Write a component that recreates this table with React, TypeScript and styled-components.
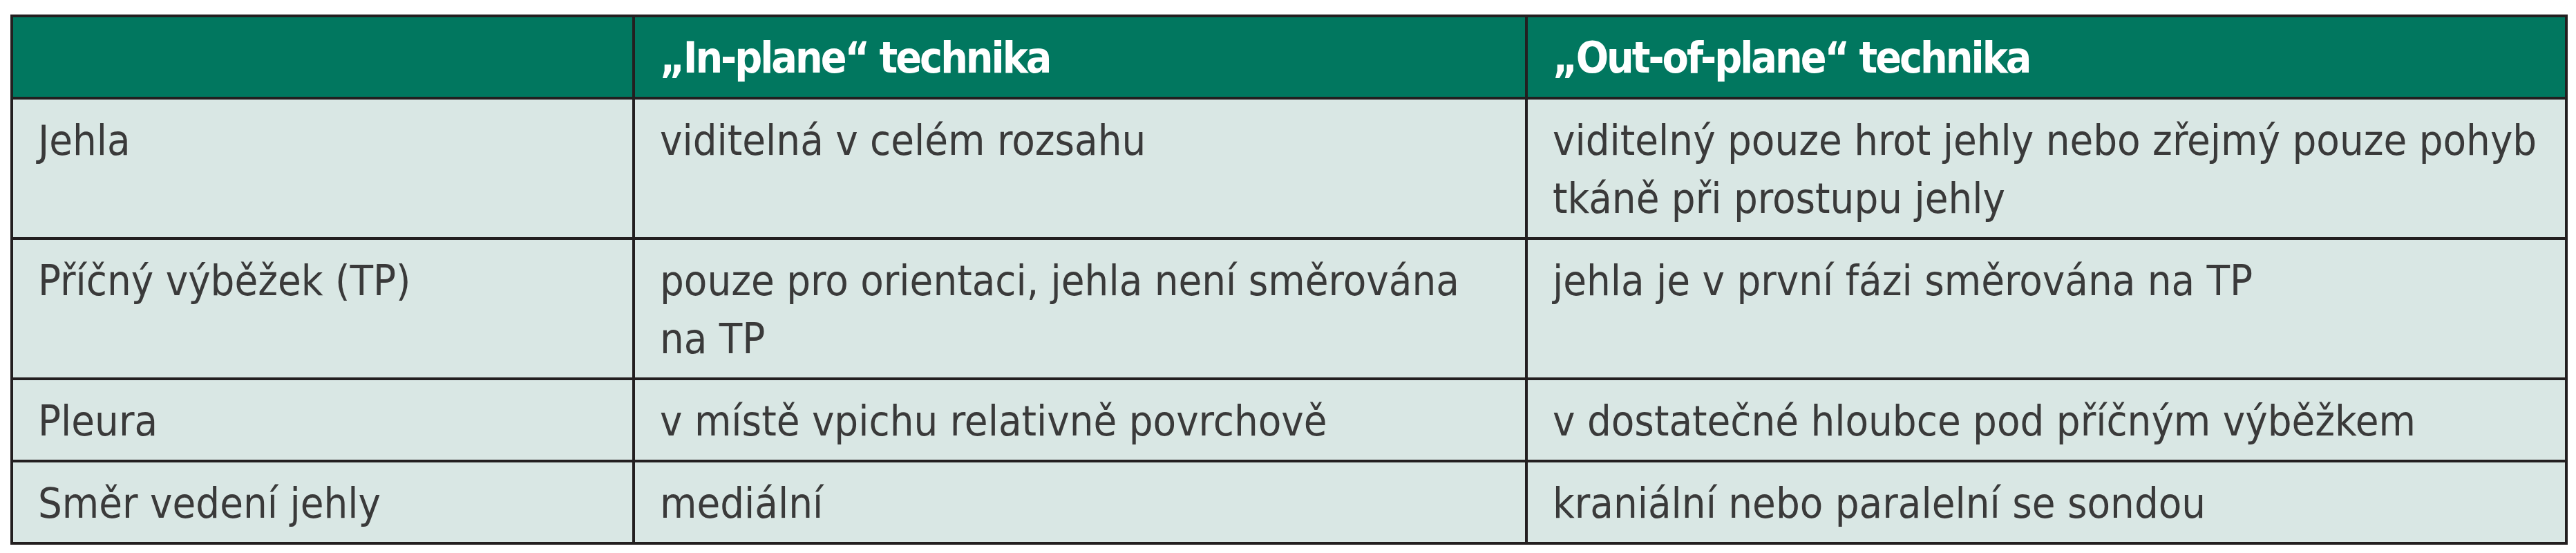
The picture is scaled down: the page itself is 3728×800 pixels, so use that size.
import React from 'react'
import styled, { createGlobalStyle } from 'styled-components'

const colors = {
  border: '#231f20',
  header: '#01775f',
  body: '#d9e7e4',
  text: '#3a3a3a',
  white: '#ffffff',
}

const GlobalStyle = createGlobalStyle`
  html, body {
    margin: 0;
    padding: 0;
    background: #ffffff;
  }
  body {
    font-family: "Liberation Sans Narrow", "DejaVu Sans Condensed", "DejaVu Sans", sans-serif;
    font-stretch: condensed;
  }
`

const Page = styled.div`
  padding: 21px 0 0 15px;
`

const Table = styled.table`
  width: 3697px;
  table-layout: fixed;
  border-collapse: collapse;
  border: 4px solid ${colors.border};
`

const cellBase = `
  border: 4px solid ${colors.border};
  padding: 17px 24px 14px 36px;
  font-size: 61px;
  line-height: 84px;
  vertical-align: top;
  text-align: left;
`

const Th = styled.th`
  ${cellBase}
  background: ${colors.header};
  color: ${colors.white};
  font-weight: 700;
  font-size: 62px;
  letter-spacing: -3px;
`

const Td = styled.td`
  ${cellBase}
  background: ${colors.body};
  color: ${colors.text};
  font-weight: 400;
`

interface Row {
  label: string
  inPlane: string
  outOfPlane: string
}

const rows: Row[] = [
  {
    label: 'Jehla',
    inPlane: 'viditelná v celém rozsahu',
    outOfPlane: 'viditelný pouze hrot jehly nebo zřejmý pouze pohyb tkáně při prostupu jehly',
  },
  {
    label: 'Příčný výběžek (TP)',
    inPlane: 'pouze pro orientaci, jehla není směrována na TP',
    outOfPlane: 'jehla je v první fázi směrována na TP',
  },
  {
    label: 'Pleura',
    inPlane: 'v místě vpichu relativně povrchově',
    outOfPlane: 'v dostatečné hloubce pod příčným výběžkem',
  },
  {
    label: 'Směr vedení jehly',
    inPlane: 'mediální',
    outOfPlane: 'kraniální nebo paralelní se sondou',
  },
]

const App = () => {
  return (
    <>
      <GlobalStyle />
      <Page>
        <Table>
          <colgroup>
            <col style={{ width: 900 }} />
            <col style={{ width: 1292 }} />
            <col style={{ width: 1505 }} />
          </colgroup>
          <thead>
            <tr>
              <Th />
              <Th>„In-plane“ technika</Th>
              <Th>„Out-of-plane“ technika</Th>
            </tr>
          </thead>
          <tbody>
            {rows.map((r) => (
              <tr key={r.label}>
                <Td>{r.label}</Td>
                <Td>{r.inPlane}</Td>
                <Td>{r.outOfPlane}</Td>
              </tr>
            ))}
          </tbody>
        </Table>
      </Page>
    </>
  )
}

export default App
